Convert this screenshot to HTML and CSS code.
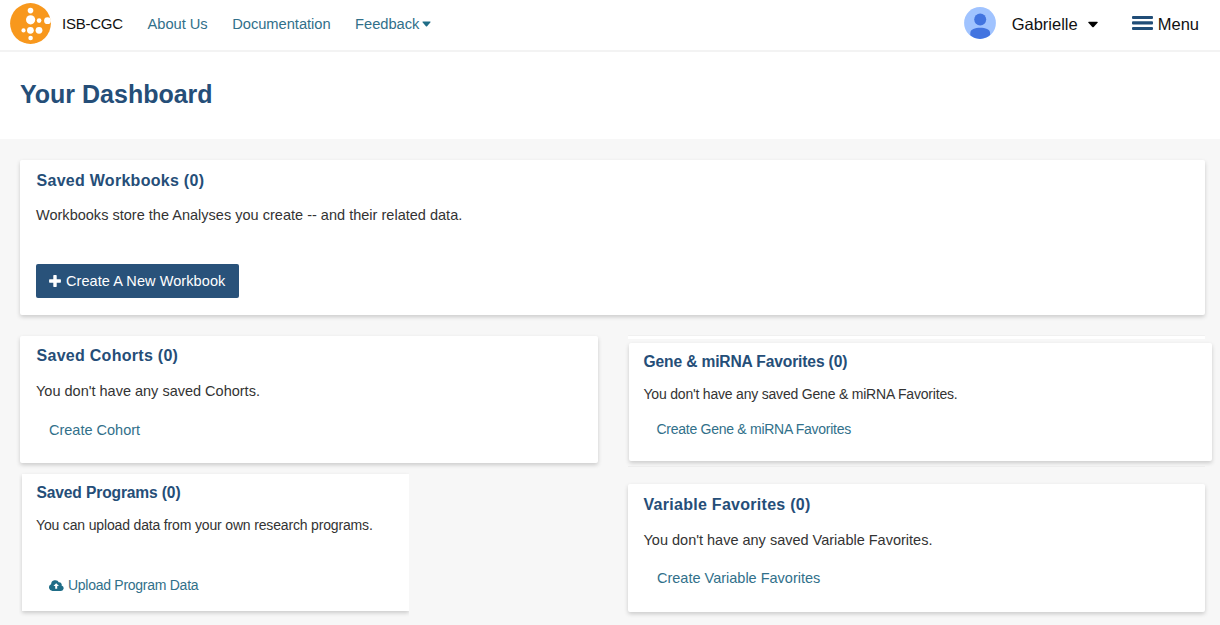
FILE: index.html
```html
<!DOCTYPE html>
<html lang="en">
<head>
<meta charset="utf-8">
<title>ISB-CGC Dashboard</title>
<link rel="stylesheet" href="styles.css">
</head>
<body>
<header class="topbar">
  <svg class="logo" viewBox="0 0 41 41">
    <circle cx="20.5" cy="20.5" r="20.4" fill="#f8981d"/>
    <g fill="#fff">
      <circle cx="20.5" cy="7.6" r="2.8"/>
      <circle cx="20.6" cy="16.8" r="4.6"/>
      <circle cx="29.1" cy="17.6" r="2.3"/>
      <circle cx="37.5" cy="17.7" r="3.4"/>
      <circle cx="13.5" cy="27.4" r="2.1"/>
      <circle cx="20.4" cy="27.3" r="3.4"/>
      <circle cx="29" cy="27.3" r="3.4"/>
      <circle cx="20.6" cy="35" r="2.3"/>
    </g>
  </svg>
  <span class="brand">ISB-CGC</span>
  <nav class="nav">
    <a>About Us</a>
    <a>Documentation</a>
    <a>Feedback<svg class="nav-caret" viewBox="0 0 9 6"><path d="M.3 1Q.3.4 1 .4h7q.7 0 .7.6L5.1 5.2q-.6.5-1.200 0z" fill="#1f6d87"/></svg></a>
  </nav>
  <div class="account">
    <svg class="avatar" viewBox="0 0 32 32">
      <circle cx="16" cy="16" r="15.900" fill="#a0c3ff"/>
      <circle cx="16.200" cy="12.600" r="6" fill="#4274e0"/>
      <path d="M6.300 28.300V26c0-3.600 4.800-5.200 9.900-5.200S26.100 22.400 26.100 26v2.100A15.900 15.900 0 0 1 16 31.900a15.900 15.900 0 0 1-9.700-3.600z" fill="#4274e0"/>
    </svg>
    <span class="user">Gabrielle</span>
    <svg class="user-caret" viewBox="0 0 10 7"><path d="M.2 1.400Q.2.700.9.700h8.200q.7 0 .7.7L5.700 5.900q-.7.600-1.400 0z" fill="#000"/></svg>
    <svg class="bars" viewBox="0 0 21 14"><g fill="#204d77"><rect width="21" height="3" rx="1"/><rect y="5.300" width="21" height="3.300" rx="1"/><rect y="10.900" width="21" height="3" rx="1"/></g></svg>
    <span class="menu">Menu</span>
  </div>
</header>
<div class="title-bar"><h1>Your Dashboard</h1></div>
<main class="board">
  <section class="card workbooks">
    <h2>Saved Workbooks (0)</h2>
    <p>Workbooks store the Analyses you create -- and their related data.</p>
    <a class="button"><svg class="plus" viewBox="0 0 12 12"><path d="M4.300.7q0-.6.600-.6h2.200q.6 0 .6.600v3.600h3.600q.6 0 .6.600v2.200q0 .6-.6.600H7.700v3.600q0 .6-.6.600H4.900q-.6 0-.6-.6V7.700H.7q-.6 0-.6-.6V4.900q0-.6.600-.6h3.600z" fill="#fff"/></svg>Create A New Workbook</a>
  </section>
  <div class="columns">
    <div class="column">
      <section class="card cohorts">
        <h2>Saved Cohorts (0)</h2>
        <p>You don't have any saved Cohorts.</p>
        <a class="link">Create Cohort</a>
      </section>
      <section class="card compact programs">
        <h2>Saved Programs (0)</h2>
        <p>You can upload data from your own research programs.</p>
        <a class="link"><svg class="cloud" viewBox="0 0 15 11"><path d="M3.700 10.900A3.500 3.500 0 0 1 2.100 4.200 4.200 4.200 0 0 1 10 2.400a2.300 2.300 0 0 1 2.600 3A2.800 2.800 0 0 1 12 10.900z" fill="#1f6d87"/><path d="M7.200 3.200 10 6.100H8.200v2.700h-2V6.100H4.400z" fill="#fff"/></svg>Upload Program Data</a>
      </section>
    </div>
    <div class="column right">
      <div class="edge-top"></div>
      <section class="card compact genes">
        <h2>Gene &amp; miRNA Favorites (0)</h2>
        <p>You don't have any saved Gene &amp; miRNA Favorites.</p>
        <a class="link">Create Gene &amp; miRNA Favorites</a>
      </section>
      <div class="edge-bottom"></div>
      <section class="card variables">
        <h2>Variable Favorites (0)</h2>
        <p>You don't have any saved Variable Favorites.</p>
        <a class="link">Create Variable Favorites</a>
      </section>
    </div>
  </div>
</main>
</body>
</html>
```
FILE: styles.css
```css
* { box-sizing: border-box; }
body {
  margin: 0;
  width: 1220px;
  height: 625px;
  overflow: hidden;
  background: #f7f7f7;
  color: #333;
  font: 14.5px/20px "Liberation Sans", Arial, sans-serif;
}
svg { display: block; flex: none; }
h1, h2, p { margin: 0; white-space: nowrap; }

.topbar {
  display: flex;
  align-items: center;
  height: 52px;
  padding: 0 21px 3px 10px;
  background: #fff;
  border-bottom: 2px solid #f3f3f3;
}
.logo { width: 41px; height: 41px; }
.brand { margin-left: 11px; width: 85.5px; font-size: 15px; letter-spacing: -.25px; color: #111; }
.nav { display: flex; gap: 24.5px; font-size: 14.7px; letter-spacing: -.03px; }
.nav a { display: flex; align-items: center; color: #31708a; }
.nav-caret { width: 9px; height: 6px; margin-left: 3px; }
.account { display: flex; align-items: center; margin-left: auto; color: #111; font-size: 16.5px; }
.avatar { width: 32px; height: 32px; margin: 0 .5px 1px 0; }
.user { margin: 1px 0 0 15px; }
.user-caret { width: 10px; height: 7px; margin: 2px 34.5px 0 10px; }
.bars { width: 21px; height: 14px; margin: 0 4.5px 2px 0; }
.menu { margin-top: 1px; }

.title-bar { height: 87px; padding: 27px 20px 0; background: #fff; }
h1 { font-size: 25px; line-height: 30px; color: #254e78; }

.board { padding: 21px 8px 0 20px; }
.card {
  background: #fff;
  border-radius: 2px;
  box-shadow: 0 2px 4px rgba(0, 0, 0, .18);
}
.card h2 { font-size: 16px; line-height: 20px; letter-spacing: .28px; color: #254e78; padding-left: .5px; }
.link { display: flex; align-items: center; margin-left: 13px; color: #31708a; }
.card.compact { font-size: 14px; letter-spacing: -.2px; }
.card.compact h2 { font-size: 15.6px; letter-spacing: -.14px; }
.compact .link { letter-spacing: -.27px; }

.workbooks { width: 1185px; height: 155px; padding: 11px 16px; }
.workbooks p { margin-top: 14px; letter-spacing: .015px; }
.button {
  display: flex;
  align-items: center;
  width: 203px;
  height: 34px;
  margin-top: 39px;
  padding-left: 13px;
  border-radius: 2px;
  background: #29527a;
  color: #fff;
  letter-spacing: .08px;
}
.plus { width: 12px; height: 12px; margin-right: 5px; }

.columns { display: flex; gap: 30px; margin-top: 21px; }
.column { flex: none; width: 578px; }

.cohorts { height: 127px; padding: 10px 16px; }
.cohorts p { margin-top: 15px; }
.cohorts .link { margin-top: 19px; }

.programs {
  width: 387px;
  height: 137px;
  margin: 11px 0 0 2px;
  padding: 9px 14px;
  border-radius: 0;
  clip-path: inset(-5px 0 -8px -3px);
}
.programs p { margin-top: 12px; letter-spacing: -.16px; }
.programs .link { margin-top: 40px; }
.cloud { width: 15px; height: 11px; margin-right: 4px; }

.edge-top { width: 577px; height: 3px; background: #fff; box-shadow: 0 -1px 1px rgba(0, 0, 0, .03); }
.genes { width: 583px; height: 118px; margin: 4px 0 0 1px; padding: 9px 14px; }
.genes p { margin-top: 12px; padding-left: .5px; }
.genes .link { margin: 15px 0 0 13.5px; }
.edge-bottom { width: 577px; height: 1px; margin-top: 5px; background: #ededed; }

.variables { width: 577px; height: 128px; margin-top: 17px; padding: 11px 15px; }
.variables p { margin-top: 15px; padding-left: .5px; }
.variables .link { margin: 18px 0 0 14px; }
```
